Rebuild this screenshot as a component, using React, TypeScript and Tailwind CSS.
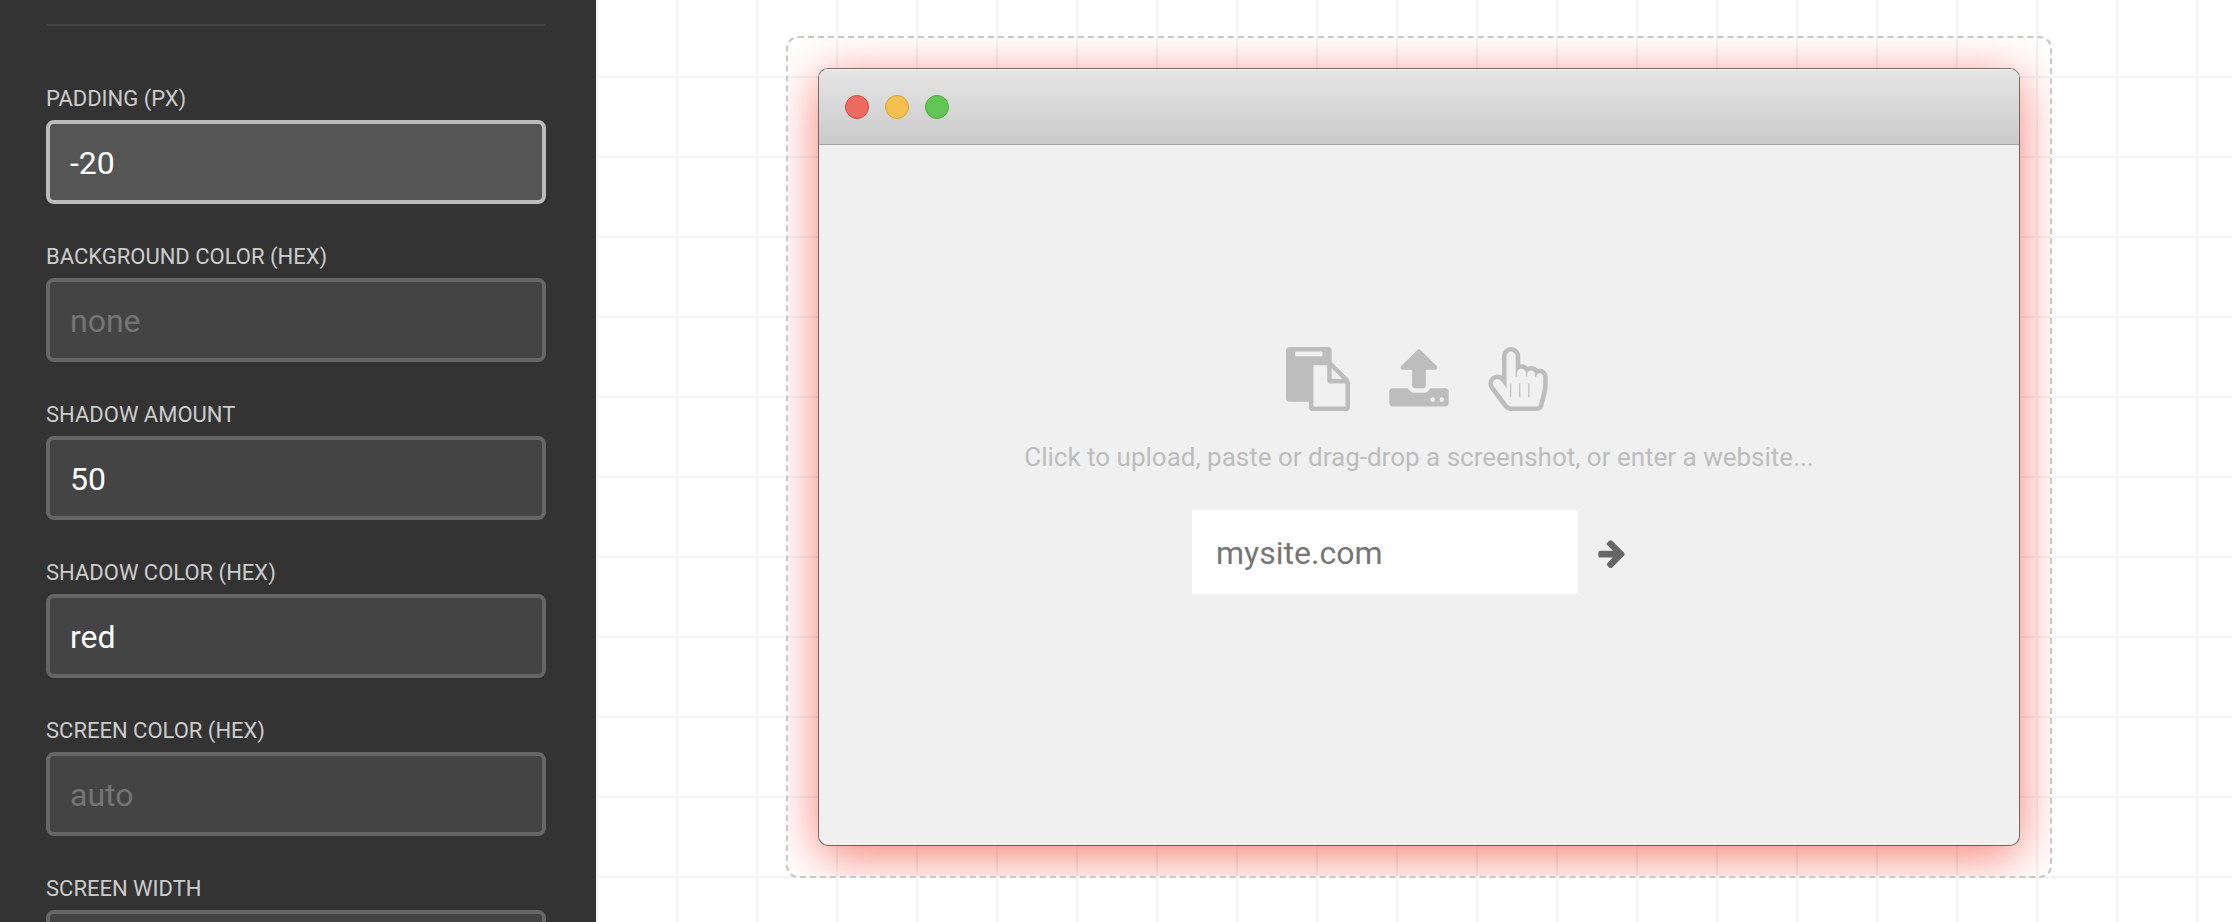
import React from "react";

type Field = {
  id: string;
  label: string;
  value?: string;
  placeholder?: string;
  active?: boolean;
};

const fields: Field[] = [
  { id: "padding", label: "Padding (px)", value: "-20", active: true },
  { id: "background-color", label: "Background color (hex)", placeholder: "none" },
  { id: "shadow-amount", label: "Shadow amount", value: "50" },
  { id: "shadow-color", label: "Shadow color (hex)", value: "red" },
  { id: "screen-color", label: "Screen color (hex)", placeholder: "auto" },
  { id: "screen-width", label: "Screen width" },
];

function SidebarField({ id, label, value, placeholder, active }: Field) {
  return (
    <div className="flex flex-col">
      <label htmlFor={id} className="mb-[7px] text-[22px] leading-7 text-[#ccc] uppercase">
        {label}
      </label>
      <input
        id={id}
        type="text"
        defaultValue={value}
        placeholder={placeholder}
        className={
          "h-[84px] w-full rounded-lg border-4 px-5 pt-0.5 text-[32px] text-white outline-none placeholder:text-[#757575] " +
          (active ? "border-[#bbb] bg-[#555]" : "border-[#666] bg-[#444]")
        }
      />
    </div>
  );
}

function PasteIcon() {
  return (
    <svg viewBox="0 0 1792 1792" className="h-16 w-16" fill="currentColor" aria-hidden="true">
      <path d="M768 1664h896v-640h-416q-40 0-68-28t-28-68v-416h-384v1152zm256-1440v-64q0-13-9.5-22.5t-22.5-9.5h-704q-13 0-22.5 9.5t-9.5 22.5v64q0 13 9.5 22.5t22.5 9.5h704q13 0 22.5-9.5t9.5-22.5zm256 672h299l-299-299v299zm512 128v672q0 40-28 68t-68 28h-960q-40 0-68-28t-28-68v-160h-544q-40 0-68-28t-28-68v-1344q0-40 28-68t68-28h1088q40 0 68 28t28 68v328q21 13 36 28l408 408q28 28 48 76t20 88z" />
    </svg>
  );
}

function UploadIcon() {
  return (
    <svg viewBox="64 0 1664 1792" className="h-16 w-[60px]" fill="currentColor" aria-hidden="true">
      <path d="M1344 1472q0-26-19-45t-45-19-45 19-19 45 19 45 45 19 45-19 19-45zm256 0q0-26-19-45t-45-19-45 19-19 45 19 45 45 19 45-19 19-45zm128-224v320q0 40-28 68t-68 28h-1472q-40 0-68-28t-28-68v-320q0-40 28-68t68-28h427q21 56 70.5 92t110.5 36h256q61 0 110.5-36t70.5-92h427q40 0 68 28t28 68zm-325-648q-17 40-59 40h-256v448q0 26-19 45t-45 19h-256q-26 0-45-19t-19-45v-448h-256q-42 0-59-40-17-39 14-69l448-448q18-19 45-19t45 19l448 448q31 30 14 69z" />
    </svg>
  );
}

function PointerIcon() {
  return (
    <svg viewBox="128 0 1664 1792" className="h-16 w-[60px]" fill="currentColor" aria-hidden="true">
      <path d="M768 128q-53 0-90.5 37.5t-37.5 90.5v896l-151-202q-41-54-107-54-52 0-89 38t-37 90q0 43 26 77l384 512q38 51 102 51h718q22 0 39.5-13.5t22.5-34.5l92-368q24-96 24-194v-217q0-41-28-71t-68-30-68 28-28 68h-32v-61q0-48-32-81.5t-80-33.5q-46 0-79 33t-33 79v64h-32v-90q0-55-37-94.5t-91-39.5q-53 0-90.5 37.5t-37.5 90.5v96h-32v-570q0-55-37-94.5t-91-39.5zm0-128q107 0 181.5 77.5t74.5 185.5v220q22-2 32-2 99 0 173 69 47-21 99-21 113 0 184 87 27-7 56-7 94 0 159 67.5t65 161.5v217q0 116-28 225l-92 368q-16 64-68 104.5t-118 40.5h-718q-60 0-114.5-27.5t-90.5-74.5l-384-512q-51-68-51-154 0-105 74.5-180.5t179.5-75.5q71 0 130 35v-547q0-106 75-181t181-75zm0 1408v-384h-32v384h32zm256 0v-384h-32v384h32zm256 0v-384h-32v384h32z" />
    </svg>
  );
}

function ArrowIcon() {
  return (
    <svg viewBox="0 0 1792 1792" className="h-8 w-8" fill="currentColor" aria-hidden="true">
      <path d="M1600 960q0 54-37 91l-651 651q-39 37-91 37-51 0-90-37l-75-75q-38-38-38-91t38-91l293-293h-704q-52 0-84.5-37.5t-32.5-90.5v-128q0-53 32.5-90.5t84.5-37.5h704l-293-294q-38-36-38-90t38-90l75-75q38-38 90-38 53 0 91 38l651 651q37 35 37 90z" />
    </svg>
  );
}

export default function App() {
  return (
    <div className="flex h-screen overflow-hidden bg-white font-[Roboto,sans-serif]">
      <aside className="w-[596px] shrink-0 overflow-hidden bg-[#333] pt-6 pr-[50px] pl-[46px]">
        <hr className="mb-[59px] border-t-2 border-[#444]" />
        <form className="flex flex-col gap-[39px]">
          {fields.map((field) => (
            <SidebarField key={field.id} {...field} />
          ))}
        </form>
      </aside>

      <main className="flex min-w-0 grow bg-[linear-gradient(#f3f3f3_2px,transparent_2px),linear-gradient(90deg,#f3f3f3_2px,transparent_2px)] bg-[size:80px_80px] bg-[position:0_76px] pt-9 pr-[180px] pb-11 pl-[190px]">
        <div className="flex grow overflow-hidden rounded-xl border-2 border-dashed border-[#c8c8c8] p-[30px]">
          <section className="flex grow flex-col overflow-hidden rounded-[10px] border border-black/50 bg-[#f0f0f0] bg-clip-padding shadow-[0_10px_50px_rgba(238,40,22,0.6)]">
            <header className="flex h-[76px] shrink-0 items-center gap-4 border-b border-[#a5a5a5] bg-linear-to-b from-[#e6e6e6] to-[#cacaca] px-[26px] shadow-[inset_0_1px_0_#f5f5f5]">
              <span className="size-6 rounded-full border border-[#d8473f] bg-[#ed6b60]" />
              <span className="size-6 rounded-full border border-[#dba03a] bg-[#f5c04f]" />
              <span className="size-6 rounded-full border border-[#4caa3c] bg-[#62c655]" />
            </header>
            <div className="flex grow flex-col items-center pt-[202px]">
              <div className="flex gap-[39px] pr-1 text-[#bdbdbd]">
                <PasteIcon />
                <UploadIcon />
                <PointerIcon />
              </div>
              <p className="mt-7 text-[26px] leading-9 text-[#bdbdbd]">
                Click to upload, paste or drag-drop a screenshot, or enter a website...
              </p>
              <form className="mt-[35px] flex items-center">
                <input
                  type="text"
                  aria-label="Website"
                  placeholder="mysite.com"
                  className="h-[84px] w-[386px] bg-white px-6 pt-0.5 text-[32px] text-[#333] outline-none placeholder:text-[#757575]"
                />
                <button
                  type="button"
                  aria-label="Go"
                  className="flex h-[84px] w-[68px] items-center justify-center pt-0.5 text-[#666]"
                >
                  <ArrowIcon />
                </button>
              </form>
            </div>
          </section>
        </div>
      </main>
    </div>
  );
}
